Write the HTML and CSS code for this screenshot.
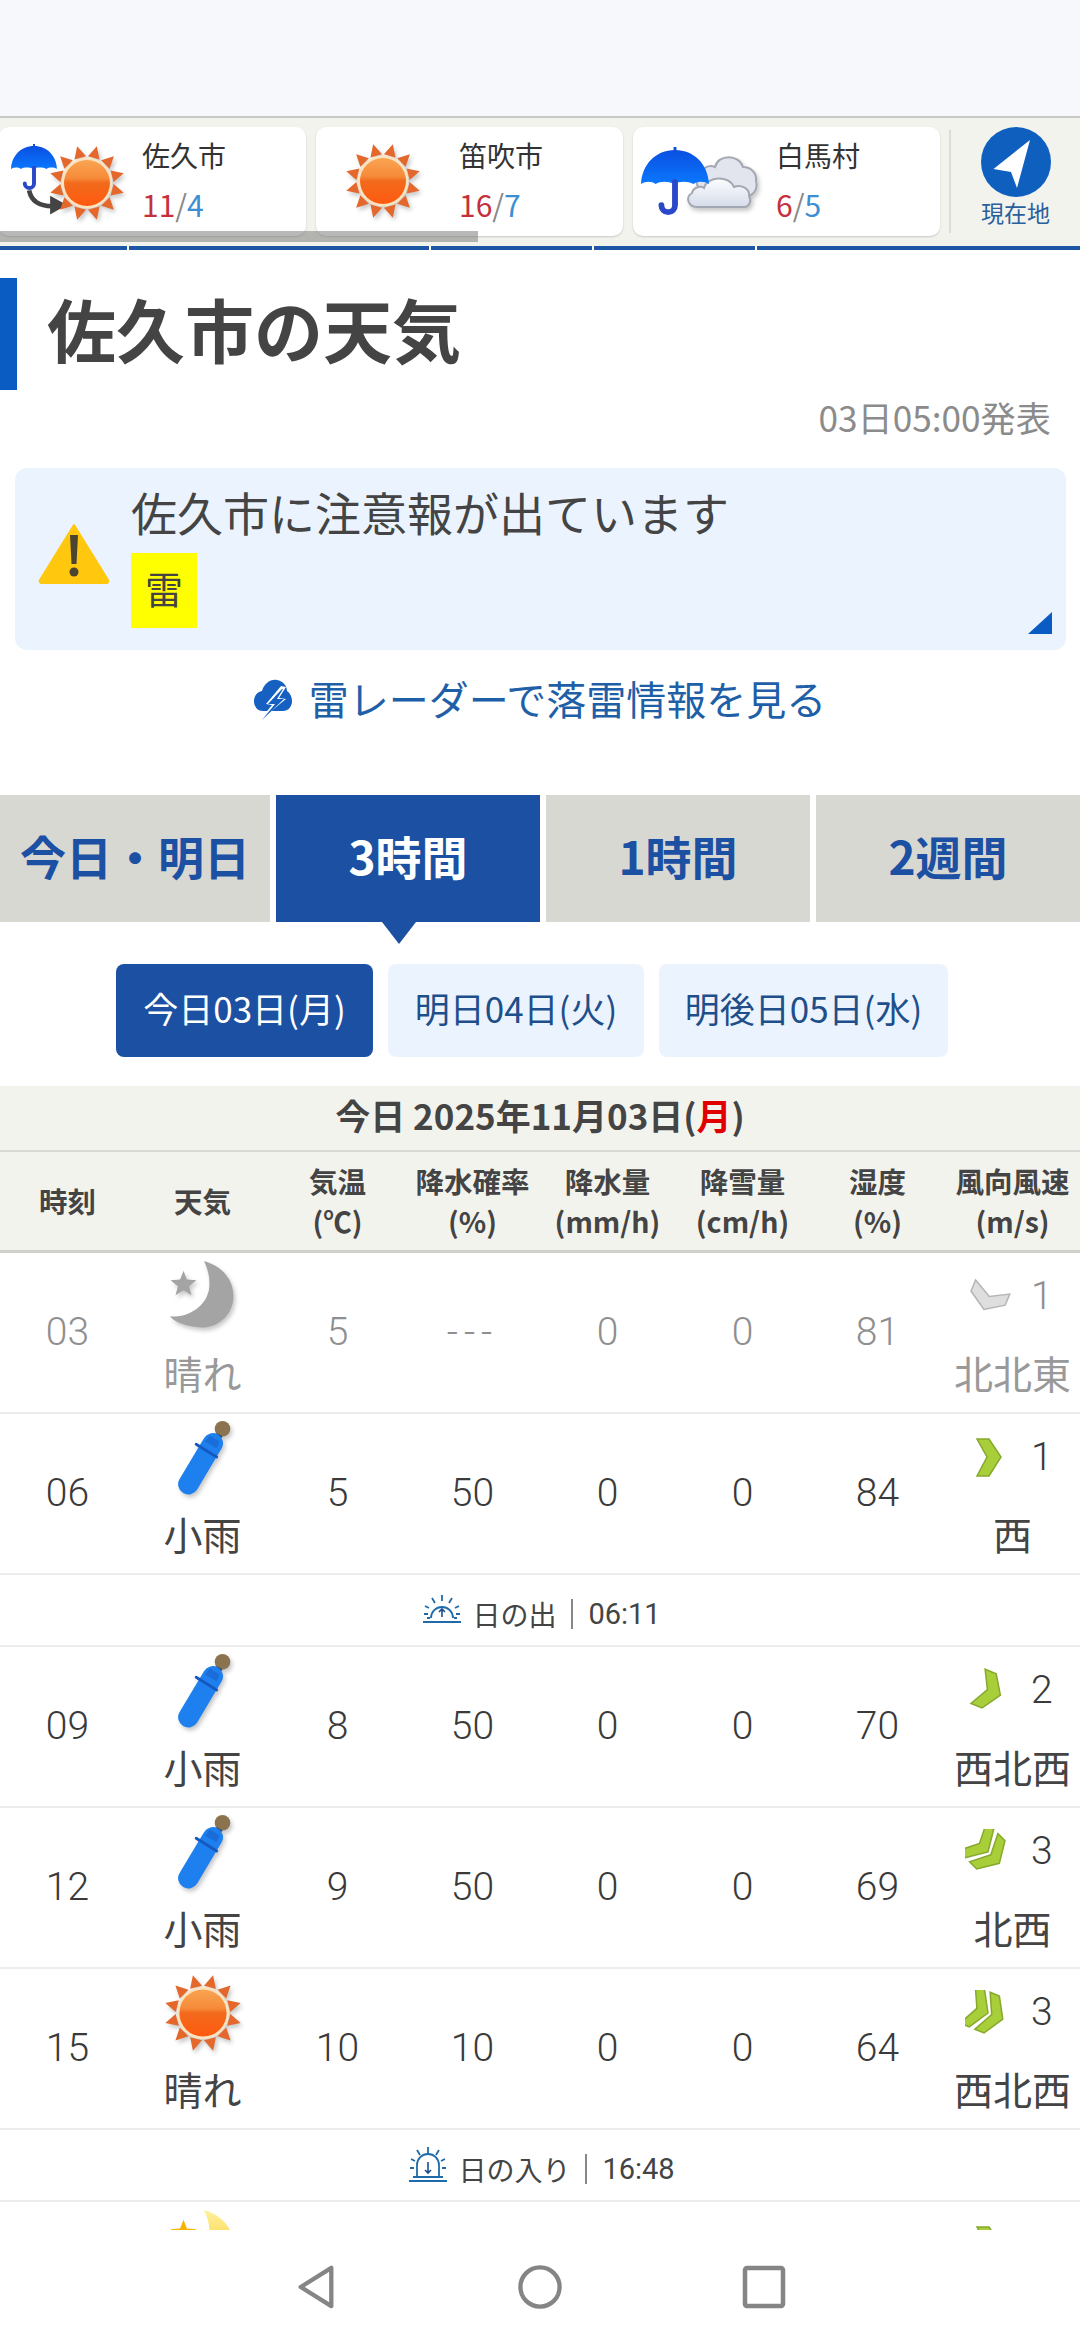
FILE: index.html
```html
<!DOCTYPE html>
<html lang="ja">
<head>
<meta charset="utf-8">
<title>佐久市の天気</title>
<link rel="stylesheet" href="styles.css">
</head>
<body>
<svg class="defs" aria-hidden="true">
  <defs>
    <linearGradient id="gSun" x1="0" y1="0" x2="0" y2="1">
      <stop offset="0" stop-color="#f9a552"/><stop offset=".4" stop-color="#f68a3a"/><stop offset=".5" stop-color="#f26a1c"/><stop offset="1" stop-color="#ff5a10"/>
    </linearGradient>
    <linearGradient id="gUmb" x1="0" y1="0" x2="0" y2="1">
      <stop offset="0" stop-color="#0a4fe0"/><stop offset="1" stop-color="#0a78ff"/>
    </linearGradient>
    <linearGradient id="gCloud" x1="0" y1="0" x2="0" y2="1">
      <stop offset="0" stop-color="#fdfdff"/><stop offset="1" stop-color="#d5dcea"/>
    </linearGradient>
    <linearGradient id="gYellow" x1="0" y1="0" x2="0" y2="1">
      <stop offset="0" stop-color="#fff0a0"/><stop offset="1" stop-color="#f8c400"/>
    </linearGradient>
    <symbol id="sun" viewBox="0 0 76 76">
      <g fill="#e4672c">
        <polygon points="32,12 44,12 38,0" transform="rotate(15 38 38)"/>
        <polygon points="32,12 44,12 38,0" transform="rotate(45 38 38)"/>
        <polygon points="32,12 44,12 38,0" transform="rotate(75 38 38)"/>
        <polygon points="32,12 44,12 38,0" transform="rotate(105 38 38)"/>
        <polygon points="32,12 44,12 38,0" transform="rotate(135 38 38)"/>
        <polygon points="32,12 44,12 38,0" transform="rotate(165 38 38)"/>
        <polygon points="32,12 44,12 38,0" transform="rotate(195 38 38)"/>
        <polygon points="32,12 44,12 38,0" transform="rotate(225 38 38)"/>
        <polygon points="32,12 44,12 38,0" transform="rotate(255 38 38)"/>
        <polygon points="32,12 44,12 38,0" transform="rotate(285 38 38)"/>
        <polygon points="32,12 44,12 38,0" transform="rotate(315 38 38)"/>
        <polygon points="32,12 44,12 38,0" transform="rotate(345 38 38)"/>
      </g>
      <circle cx="38" cy="38" r="25.500" fill="#fbe3c0"/>
      <circle cx="38" cy="38" r="23" fill="url(#gSun)"/>
    </symbol>
    <symbol id="umbOpen" viewBox="0 0 70 70">
      <path d="M33.500 0h3v6h-3z" fill="#0a50e0"/>
      <path d="M35 3C15 3 1 18 0 38c5-3 11-3 15 0 5-3 13-3 19 0 6-3 14-3 20 0 4-3 11-3 16 0C69 18 55 3 35 3Z" fill="url(#gUmb)"/>
      <path d="M35 36V60a7 7 0 0 1-14 0" fill="none" stroke="#2a48c8" stroke-width="6" stroke-linecap="round"/>
    </symbol>
    <symbol id="umbClosed" viewBox="0 0 80 78">
      <circle cx="60" cy="9" r="8" fill="#8c7350"/>
      <path d="M57 15 53 22" stroke="#33506e" stroke-width="7"/>
      <path d="M25 66 50 24" stroke="#1e80ee" stroke-width="21" stroke-linecap="round" fill="none"/>
      <path d="M47 16 57 22 54 29 42 22Z" fill="#1a6cd8"/>
      <path d="M33 25 54 38" stroke="#1558c0" stroke-width="3" stroke-linecap="round"/>
    </symbol>
    <symbol id="clouds" viewBox="0 0 78 60">
      <path d="M22 38c-7-1-9-10-2-13 0-8 8-12 14-9 3-13 24-13 28 0 8 0 14 6 13 14 2 6-1 12-5 14H30Z" fill="#e2e5ee" stroke="#a4a8b2" stroke-width="2"/>
      <path d="M16 56c-9 0-12-10-5-14 1-5 8-8 12-5 3-12 25-13 30-1 6-3 16 1 15 9 3 5 0 11-5 11Z" fill="url(#gCloud)" stroke="#a4a8b2" stroke-width="2"/>
    </symbol>
    <symbol id="moon" viewBox="0 0 80 78">
      <path d="M41 2C62 8 73 24 71 42 69 60 52 72 36 70 24 69 13 66 6 59 24 60 42 50 46 32 48 21 45 10 41 2Z" fill="#a4a4a4"/>
      <polygon points="20,12 23.500,21.100 33.300,21.700 25.700,27.900 28.200,37.300 20,32 11.800,37.300 14.300,27.900 6.700,21.700 16.500,21.100" fill="#a4a4a4"/>
    </symbol>
    <symbol id="moonYellow" viewBox="0 0 80 78">
      <path d="M41 2C62 8 73 24 71 42 69 60 52 72 36 70 24 69 13 66 6 59 24 60 42 50 46 32 48 21 45 10 41 2Z" fill="url(#gYellow)"/>
      <polygon points="20,12 23.500,21.100 33.300,21.700 25.700,27.900 28.200,37.300 20,32 11.800,37.300 14.300,27.900 6.700,21.700 16.500,21.100" fill="#f6b400"/>
    </symbol>
    <symbol id="chev" viewBox="0 0 46 46">
      <polygon points="12,4 24,4 36,22 24,41 12,41 22,22"/>
    </symbol>
    <symbol id="chev2" viewBox="0 0 46 46">
      <polygon points="1,3 11,3 23,23 11,43 1,43 11,23"/>
      <polygon points="17,3 27,3 39,23 27,43 17,43 27,23"/>
    </symbol>
    <symbol id="sunrise" viewBox="0 0 38 30">
      <path d="M0 28H38" stroke="#1f6aa8" stroke-width="2"/>
      <path d="M8 24a11 11 0 0 1 22 0M4 24H7M31 24H34" fill="none" stroke="#1f6aa8" stroke-width="1.800"/>
      <path d="M19 1V7M9 4l3 5M29 4l-3 5M2 12l4 2M36 12l-4 2M1 20h4M33 20h4" stroke="#1f6aa8" stroke-width="1.800" fill="none"/>
      <path d="M19 23V15M16 18l3-3 3 3" fill="none" stroke="#1c4e8c" stroke-width="1.600"/>
    </symbol>
    <symbol id="sunset" viewBox="0 0 38 36">
      <path d="M0 34H38" stroke="#1f6aa8" stroke-width="2.200"/>
      <path d="M8 30V18a11 11 0 0 1 22 0V30M4 30H34" fill="none" stroke="#1f6aa8" stroke-width="1.800"/>
      <path d="M19 0V7M8 3l3 5M30 3l-3 5M2 12l4 2M36 12l-4 2M1 21h4M33 21h4" stroke="#1f6aa8" stroke-width="1.800" fill="none"/>
      <path d="M19 15V26M16 23l3 3 3-3" fill="none" stroke="#1c4e8c" stroke-width="1.600"/>
    </symbol>
  </defs>
</svg>

<div class="page">
  <main class="main">
    <div class="topbar"></div>

    <section class="strip">
      <div class="track">
        <a class="card">
          <span class="card-icon">
            <svg class="ico-umb-s" viewBox="0 0 70 70"><use href="#umbOpen"/></svg>
            <svg class="ico-then" viewBox="0 0 40 26"><path d="M2 1c2 10 10 15 22 15" fill="none" stroke="#444" stroke-width="4.500"/><polygon points="22,6 38,15 22,24" fill="#444"/></svg>
            <svg class="ico-sun-r sh" viewBox="0 0 76 76"><use href="#sun"/></svg>
          </span>
          <span class="card-body"><span class="card-name">佐久市</span><span class="card-temp"><b class="hi">11</b><i class="sl">/</i><b class="lo">4</b></span></span>
        </a>
        <a class="card">
          <span class="card-icon card-icon-center">
            <svg class="ico-sun sh" viewBox="0 0 76 76"><use href="#sun"/></svg>
          </span>
          <span class="card-body"><span class="card-name">笛吹市</span><span class="card-temp"><b class="hi">16</b><i class="sl">/</i><b class="lo">7</b></span></span>
        </a>
        <a class="card">
          <span class="card-icon">
            <svg class="ico-cloud sh" viewBox="0 0 78 60"><use href="#clouds"/></svg>
            <svg class="ico-umb-l" viewBox="0 0 70 70"><use href="#umbOpen"/></svg>
          </span>
          <span class="card-body"><span class="card-name">白馬村</span><span class="card-temp"><b class="hi">6</b><i class="sl">/</i><b class="lo">5</b></span></span>
        </a>
      </div>
      <div class="locate">
        <svg class="locate-ico" viewBox="0 0 70 70"><circle cx="35" cy="35" r="35" fill="#0f5fbe"/><polygon points="49,13 12.500,42 30,45 36,61" fill="#fff"/></svg>
        <span class="locate-txt">現在地</span>
      </div>
      <div class="scrollbar"></div>
    </section>
    <div class="tabline"></div>

    <h1 class="title">佐久市の天気</h1>
    <p class="stamp">03日05:00発表</p>

    <section class="warn">
      <svg class="warn-ico" viewBox="0 0 72 62"><path d="M36 3 70 58a2 2 0 0 1-2 3H4a2 2 0 0 1-2-3Z" fill="#ffc80f" stroke="#ffc80f" stroke-width="2" stroke-linejoin="round"/><polygon points="32,13 40,13 38.500,42 33.500,42" fill="#4a4430"/><circle cx="36" cy="50" r="4.500" fill="#4a4430"/></svg>
      <div class="warn-body">
        <p class="warn-text">佐久市に注意報が出ています</p>
        <span class="warn-badge">雷</span>
      </div>
      <span class="warn-corner"></span>
    </section>

    <a class="radar">
      <svg class="radar-ico" viewBox="0 0 38 42"><path d="M9 32C3 32 0 27 0 22c0-5 3-9 8-10 2-7 8-12 15-11 6 1 10 6 10 11 3 2 5 6 5 10 0 6-4 10-9 10Z" fill="#1560c0"/><polygon points="27,7 12,25 18,26 5,42 32,20 25,19 32,8" fill="#fff"/><polygon points="28,10 14,25 21,25 8,41 30,20 23,20 29,10" fill="#1560c0"/></svg>
      <span class="radar-txt">雷レーダーで落雷情報を見る</span>
    </a>

    <nav class="tabs">
      <a class="tab">今日・明日</a>
      <a class="tab tab-on">3時間</a>
      <a class="tab">1時間</a>
      <a class="tab">2週間</a>
    </nav>

    <nav class="days">
      <a class="day day-on">今日03日(月)</a>
      <a class="day">明日04日(火)</a>
      <a class="day">明後日05日(水)</a>
    </nav>

    <section class="table">
      <div class="datebar">今日 2025年11月03日(<span class="red">月</span>)</div>
      <div class="row head">
        <div>時刻</div><div>天気</div><div>気温<br>(℃)</div><div>降水確率<br>(%)</div><div>降水量<br>(mm/h)</div><div>降雪量<br>(cm/h)</div><div>湿度<br>(%)</div><div>風向風速<br>(m/s)</div>
      </div>

      <div class="row data past">
        <div>03</div>
        <div class="stack"><svg class="wx sh" viewBox="0 0 80 78"><use href="#moon"/></svg><span class="stack-txt">晴れ</span></div>
        <div>5</div><div class="dash">---</div><div>0</div><div>0</div><div>81</div>
        <div class="stack"><span class="wind"><svg class="chev chev-g" viewBox="0 0 46 46"><g transform="rotate(112.500 23 23)"><use href="#chev"/></g></svg><span>1</span></span><span class="stack-txt">北北東</span></div>
      </div>

      <div class="row data">
        <div>06</div>
        <div class="stack"><svg class="wx sh" viewBox="0 0 80 78"><use href="#umbClosed"/></svg><span class="stack-txt">小雨</span></div>
        <div>5</div><div>50</div><div>0</div><div>0</div><div>84</div>
        <div class="stack"><span class="wind"><svg class="chev" viewBox="0 0 46 46"><use href="#chev"/></svg><span>1</span></span><span class="stack-txt">西</span></div>
      </div>

      <div class="sunrow"><svg class="sun-ico" viewBox="0 0 38 30"><use href="#sunrise"/></svg><span>日の出</span><span class="sun-time">06:11</span></div>

      <div class="row data">
        <div>09</div>
        <div class="stack"><svg class="wx sh" viewBox="0 0 80 78"><use href="#umbClosed"/></svg><span class="stack-txt">小雨</span></div>
        <div>8</div><div>50</div><div>0</div><div>0</div><div>70</div>
        <div class="stack"><span class="wind"><svg class="chev" viewBox="0 0 46 46"><g transform="rotate(22.500 23 23)"><use href="#chev"/></g></svg><span>2</span></span><span class="stack-txt">西北西</span></div>
      </div>

      <div class="row data">
        <div>12</div>
        <div class="stack"><svg class="wx sh" viewBox="0 0 80 78"><use href="#umbClosed"/></svg><span class="stack-txt">小雨</span></div>
        <div>9</div><div>50</div><div>0</div><div>0</div><div>69</div>
        <div class="stack"><span class="wind"><svg class="chev" viewBox="0 0 46 46"><g transform="rotate(45 23 23)"><use href="#chev2"/></g></svg><span>3</span></span><span class="stack-txt">北西</span></div>
      </div>

      <div class="row data">
        <div>15</div>
        <div class="stack"><svg class="wx sh" viewBox="0 0 76 76"><use href="#sun"/></svg><span class="stack-txt">晴れ</span></div>
        <div>10</div><div>10</div><div>0</div><div>0</div><div>64</div>
        <div class="stack"><span class="wind"><svg class="chev" viewBox="0 0 46 46"><g transform="rotate(22.500 23 23)"><use href="#chev2"/></g></svg><span>3</span></span><span class="stack-txt">西北西</span></div>
      </div>

      <div class="sunrow"><svg class="sun-ico sun-ico-set" viewBox="0 0 38 36"><use href="#sunset"/></svg><span>日の入り</span><span class="sun-time">16:48</span></div>

      <div class="row data">
        <div></div>
        <div class="stack"><svg class="wx" viewBox="0 0 80 78"><use href="#moonYellow"/></svg></div>
        <div></div><div></div><div></div><div></div><div></div>
        <div class="stack"><span class="wind"><svg class="chev" viewBox="0 0 46 46"><use href="#chev"/></svg></span></div>
      </div>
    </section>
  </main>

  <footer class="navbar">
    <svg class="nav-ico" viewBox="0 0 40 46"><path d="M36 3V43L4 23Z" fill="none" stroke="#858585" stroke-width="4.500" stroke-linejoin="round"/></svg>
    <svg class="nav-ico" viewBox="0 0 46 46"><circle cx="23" cy="23" r="20.500" fill="none" stroke="#858585" stroke-width="4.500"/></svg>
    <svg class="nav-ico" viewBox="0 0 44 44"><rect x="3" y="3" width="38" height="38" rx="2" fill="none" stroke="#858585" stroke-width="4.500"/></svg>
  </footer>
</div>
</body>
</html>
```

FILE: styles.css
```css
* { box-sizing: border-box; }
html, body { margin: 0; padding: 0; background: #fff; }
body {
  width: 1080px;
  height: 2344px;
  overflow: hidden;
  font-family: "Noto Sans CJK JP", "Noto Sans", sans-serif;
  color: #444;
}
p, h1 { margin: 0; }
i, b { font-style: normal; font-weight: 400; }
.defs { display: block; width: 0; height: 0; overflow: hidden; }
.sh { filter: drop-shadow(2px 3px 2px rgba(0, 0, 0, .22)); }

.page { display: flex; flex-direction: column; height: 2344px; }
.main { height: 2230px; overflow: hidden; flex: none; }

.topbar { height: 118px; background: #f7f8fc; border-bottom: 2px solid #c9c9c6; }

/* city strip */
.strip {
  position: relative;
  height: 128px;
  padding-top: 9px;
  background: #f3f3ee;
  display: flex;
}
.track { display: flex; gap: 10px; margin-left: -1px; }
.card {
  width: 307px;
  height: 109px;
  background: #fff;
  border-radius: 10px;
  box-shadow: 0 1px 2px rgba(0, 0, 0, .18);
  display: flex;
}
.card-icon { position: relative; display: block; width: 143px; height: 109px; flex: none; }
.card-icon-center { display: flex; align-items: center; padding-left: 29px; padding-bottom: 2px; }
.ico-sun { width: 76px; height: 76px; }
.ico-umb-s { position: absolute; left: 12px; top: 17px; width: 46px; height: 46px; }
.ico-then { position: absolute; left: 28px; top: 62px; width: 42px; height: 28px; }
.ico-sun-r { position: absolute; left: 50px; top: 18px; width: 76px; height: 76px; }
.ico-umb-l { position: absolute; left: 8px; top: 20px; width: 68px; height: 68px; }
.ico-cloud { position: absolute; left: 48px; top: 24px; width: 78px; height: 60px; }
.card-body { display: flex; flex-direction: column; }
.card-name { font-size: 28px; line-height: 40px; margin-top: 8px; color: #333; }
.card-temp { font-size: 30px; line-height: 40px; margin-top: 9px; }
.hi { color: #c4303c; }
.lo { color: #3b8fd2; }
.sl { color: #888; }
.locate {
  margin-left: 9px;
  width: 134px;
  height: 103px;
  border-left: 2px solid #dcdcd7;
  margin-top: 3px;
  display: flex;
  flex-direction: column;
  align-items: center;
}
.locate-ico { width: 70px; height: 70px; margin-top: -3px; flex: none; }
.locate-txt { font-size: 23px; line-height: 32px; color: #2a5f9e; margin-top: -1px; }
.scrollbar {
  position: absolute;
  left: 0;
  top: 113px;
  width: 478px;
  height: 11px;
  background: rgba(125, 125, 125, .55);
}
.tabline {
  height: 4px;
  background: linear-gradient(90deg,
    #1c56a5 127px, #fff 127px, #fff 129px,
    #1c56a5 129px, #1c56a5 429px, #fff 429px, #fff 431px,
    #1c56a5 431px, #1c56a5 592px, #fff 592px, #fff 594px,
    #1c56a5 594px, #1c56a5 755px, #fff 755px, #fff 757px,
    #1c56a5 757px);
}

/* heading */
.title {
  margin-top: 28px;
  height: 112px;
  border-left: 17px solid #0b5cc2;
  padding-left: 30px;
  font-size: 69px;
  line-height: 100px;
  font-weight: 700;
  color: #444;
}
.stamp {
  margin-top: 5px;
  height: 47px;
  line-height: 44px;
  font-size: 35.200px;
  text-align: right;
  padding-right: 29px;
  color: #8b8b8b;
}

/* warning */
.warn {
  position: relative;
  margin: 26px 14px 0 15px;
  height: 182px;
  background: #ebf4fe;
  border-radius: 12px;
  display: flex;
  gap: 21px;
  padding-left: 23px;
}
.warn-ico { width: 72px; height: 62px; margin-top: 54px; flex: none; }
.warn-text { margin-top: 13px; font-size: 46px; line-height: 60px; color: #444; }
.warn-badge {
  display: block;
  margin-top: 12px;
  width: 66px;
  height: 75px;
  line-height: 70px;
  text-align: center;
  font-size: 38px;
  background: #ffff00;
  color: #444;
}
.warn-corner {
  position: absolute;
  right: 14px;
  bottom: 16px;
  width: 0;
  height: 0;
  border-left: 24px solid transparent;
  border-bottom: 22px solid #0b5cc2;
}

.radar {
  margin-top: 20px;
  height: 60px;
  display: flex;
  align-items: center;
  justify-content: center;
  gap: 17px;
  font-size: 40px;
  color: #1e5fa8;
}
.radar-ico { width: 38px; height: 42px; flex: none; }
.radar-txt { padding-bottom: 5px; }

/* tabs */
.tabs {
  margin-top: 65px;
  height: 127px;
  display: grid;
  grid-template-columns: 270px 264px 264px 264px;
  gap: 6px;
}
.tab {
  position: relative;
  background: #d8d8d3;
  color: #1c50a2;
  font-size: 46px;
  font-weight: 700;
  display: flex;
  align-items: center;
  justify-content: center;
  padding-bottom: 8px;
}
.tab-on { background: #1c50a2; color: #fff; }
.tab-on::after {
  content: "";
  position: absolute;
  left: 106px;
  top: 100%;
  border-left: 17px solid transparent;
  border-right: 17px solid transparent;
  border-top: 22px solid #1c50a2;
}
.days {
  margin-top: 42px;
  height: 93px;
  padding-left: 116px;
  display: grid;
  grid-template-columns: 257px 256px 289px;
  gap: 15px;
}
.day {
  border-radius: 8px;
  background: #ebf4fe;
  color: #1f4f8a;
  font-size: 35px;
  display: flex;
  align-items: center;
  justify-content: center;
  padding-bottom: 6px;
}
.day-on { background: #1c50a2; color: #fff; }

/* table */
.table { margin-top: 29px; }
.datebar {
  height: 66px;
  background: #f3f3ee;
  border-bottom: 2px solid #d8d8d4;
  text-align: center;
  font-size: 35px;
  line-height: 58px;
  font-weight: 700;
  color: #444;
}
.red { color: #e00000; }
.row { display: grid; grid-template-columns: repeat(8, 135px); }
.head {
  height: 101px;
  background: #f3f3ee;
  border-bottom: 3px solid #cfcfcb;
  align-items: center;
  text-align: center;
  font-size: 28.500px;
  line-height: 40px;
  font-weight: 700;
  color: #444;
}
.data {
  height: 161px;
  padding-bottom: 2px;
  border-bottom: 2px solid #ececec;
  align-items: center;
  text-align: center;
  font-family: Roboto, "Noto Sans CJK JP", sans-serif;
  font-weight: 300;
  font-size: 39px;
  color: #3a3a3a;
}
.past { color: #8f8f8f; }
.dash { letter-spacing: 6px; }
.stack {
  align-self: start;
  padding-top: 5px;
  display: flex;
  flex-direction: column;
  align-items: center;
}
.wx { width: 78px; height: 78px; display: block; }
.stack-txt { margin-top: 11px; line-height: 50px; font-size: 39px; font-weight: 400; color: #444; white-space: nowrap; font-family: "Noto Sans CJK JP", sans-serif; }
.past .stack-txt { color: #999; }
.wind {
  height: 78px;
  width: 100%;
  padding-left: 20px;
  padding-bottom: 2px;
  display: flex;
  align-items: center;
  gap: 20px;
}
.chev { width: 46px; height: 46px; fill: #a8cf3a; stroke: #86a82c; stroke-width: 1.5; flex: none; margin-top: 2px; }
.chev-g { fill: #dedede; stroke: #b5b5b5; }
.sunrow {
  height: 72px;
  padding-top: 7px;
  padding-left: 4px;
  border-bottom: 2px solid #ececec;
  display: flex;
  align-items: center;
  justify-content: center;
  gap: 15px;
  font-size: 28px;
  color: #444;
}
.sun-ico { width: 38px; height: 30px; margin-top: -10px; margin-right: -4px; flex: none; }
.sun-ico-set { height: 36px; margin-top: -8px; }
.sun-time {
  border-left: 2px solid #888;
  padding-left: 15px;
  line-height: 30px;
  font-family: Roboto, "Noto Sans CJK JP", sans-serif;
  font-size: 29px;
}

/* system navigation */
.navbar {
  flex: 1;
  background: #fff;
  display: flex;
  align-items: flex-start;
  justify-content: center;
  gap: 180px;
  padding-top: 35px;
}
.nav-ico { width: 44px; height: 44px; flex: none; }
```
